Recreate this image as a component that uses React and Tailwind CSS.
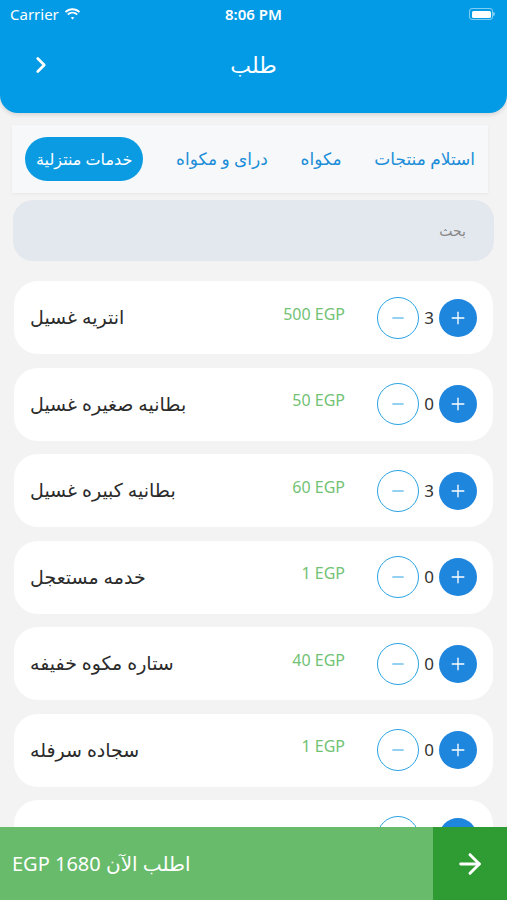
import { ArrowRight, ChevronRight, Minus, Plus } from "lucide-react";

const items = [
  { name: "انتريه غسيل", price: 500, qty: 3 },
  { name: "بطانيه صغيره غسيل", price: 50, qty: 0 },
  { name: "بطانيه كبيره غسيل", price: 60, qty: 3 },
  { name: "خدمه مستعجل", price: 1, qty: 0 },
  { name: "ستاره مكوه خفيفه", price: 40, qty: 0 },
  { name: "سجاده سرفله", price: 1, qty: 0 },
  { name: "سجاده كبيره", price: 1, qty: 0 },
];

const tabs = ["استلام منتجات", "مكواه", "دراى و مكواه", "خدمات منتزلية"];

function StatusBar() {
  return (
    <div className="h-[28px] flex items-center justify-between px-[10px] text-white text-[15px]">
      <div className="flex items-center gap-[5px] w-[120px]">
        <span>Carrier</span>
        <svg width="17" height="12" viewBox="0 0 17 12" fill="white">
          <path d="M8.5 2.2c2.4 0 4.6.9 6.3 2.5l1.3-1.3C14.1 1.4 11.4.3 8.5.3S2.9 1.4.9 3.4l1.3 1.3C3.9 3.1 6.1 2.2 8.5 2.2z" />
          <path d="M8.5 5.6c1.5 0 2.9.6 4 1.6l1.3-1.3c-1.4-1.3-3.3-2.2-5.3-2.2S4.6 4.6 3.2 5.9l1.3 1.3c1.1-1 2.5-1.6 4-1.6z" />
          <path d="M8.5 8.9c.7 0 1.3.3 1.8.7L8.5 11.5 6.7 9.6c.5-.4 1.1-.7 1.8-.7z" />
        </svg>
      </div>
      <span className="font-semibold">8:06 PM</span>
      <div className="w-[120px] flex justify-end pr-[2px]">
        <div className="flex items-center">
          <div className="w-[24px] h-[12px] rounded-[3px] border border-white/50 p-[1.5px]">
            <div className="w-full h-full bg-white rounded-[1.5px]" />
          </div>
          <div className="w-[1.5px] h-[4px] bg-white/50 rounded-r" />
        </div>
      </div>
    </div>
  );
}

function Row({ item }) {
  return (
    <div className="h-[73px] shrink-0 bg-white rounded-[24px] flex items-center pl-[16px] pr-[16px]">
      <div className="flex-1 text-[19px] text-[#2b2b2b]">{item.name}</div>
      <div className="text-[16px] text-[#72c274] mb-[8px] mr-[32px]">{item.price} EGP</div>
      <div className="w-[42px] h-[42px] rounded-full border-[1.5px] border-[#2ba3e3] flex items-center justify-center">
        <Minus size={18} color="#2ba3e3" strokeWidth={1.5} />
      </div>
      <div className="w-[20px] text-center text-[17px] text-[#333]">{item.qty}</div>
      <div className="w-[38px] h-[38px] rounded-full bg-[#1f86de] flex items-center justify-center">
        <Plus size={20} color="white" strokeWidth={1.6} />
      </div>
    </div>
  );
}

export default function App() {
  return (
    <div
      className="relative w-[507px] h-[900px] overflow-hidden bg-[#f3f3f3]"
      style={{ fontFamily: '"Noto Sans", "DejaVu Sans", sans-serif' }}
    >
      {/* Header */}
      <div className="h-[113px] bg-[#039be5] rounded-b-[18px] shadow-[0_2px_4px_rgba(0,0,0,0.12)]">
        <StatusBar />
        <div className="relative h-[76px] flex items-center justify-center">
          <ChevronRight className="absolute left-[28px] top-[24px]" size={26} color="white" strokeWidth={2.5} />
          <span className="text-white text-[22px] mb-[3px]">طلب</span>
        </div>
      </div>

      {/* Tabs */}
      <div className="mx-[12px] mt-[12px] h-[68px] w-[476px] bg-[#f7f8f9] shadow-[0_1px_3px_rgba(0,0,0,0.05)] flex items-center justify-between px-[13px]" dir="rtl">
        {tabs.map((t, i) =>
          i === tabs.length - 1 ? (
            <div key={t} className="h-[44px] px-[11px] rounded-full bg-[#0a9be3] text-white text-[16px] flex items-center">
              {t}
            </div>
          ) : (
            <div key={t} className="text-[#1b8dd8] text-[17px]">{t}</div>
          )
        )}
      </div>

      {/* Search */}
      <div className="mx-[13px] mt-[7px] h-[61px] rounded-[20px] bg-[#e3e7ee] flex items-center justify-end px-[28px]">
        <span className="text-[#888] text-[14px]">بحث</span>
      </div>

      {/* Items */}
      <div className="mx-[14px] mt-[20px] flex flex-col gap-[13.5px]">
        {items.map((item) => (
          <Row key={item.name} item={item} />
        ))}
      </div>

      {/* Order bar */}
      <div className="absolute left-0 bottom-0 w-full h-[73px] flex">
        <div className="flex-1 bg-[#67bb6b] flex items-center pl-[12px] text-white text-[20px]">
          <span dir="rtl">اطلب الآن 1680 EGP</span>
        </div>
        <div className="w-[74px] bg-[#2f9b33] flex items-center justify-center">
          <ArrowRight size={32} color="white" strokeWidth={2.2} />
        </div>
      </div>
    </div>
  );
}
